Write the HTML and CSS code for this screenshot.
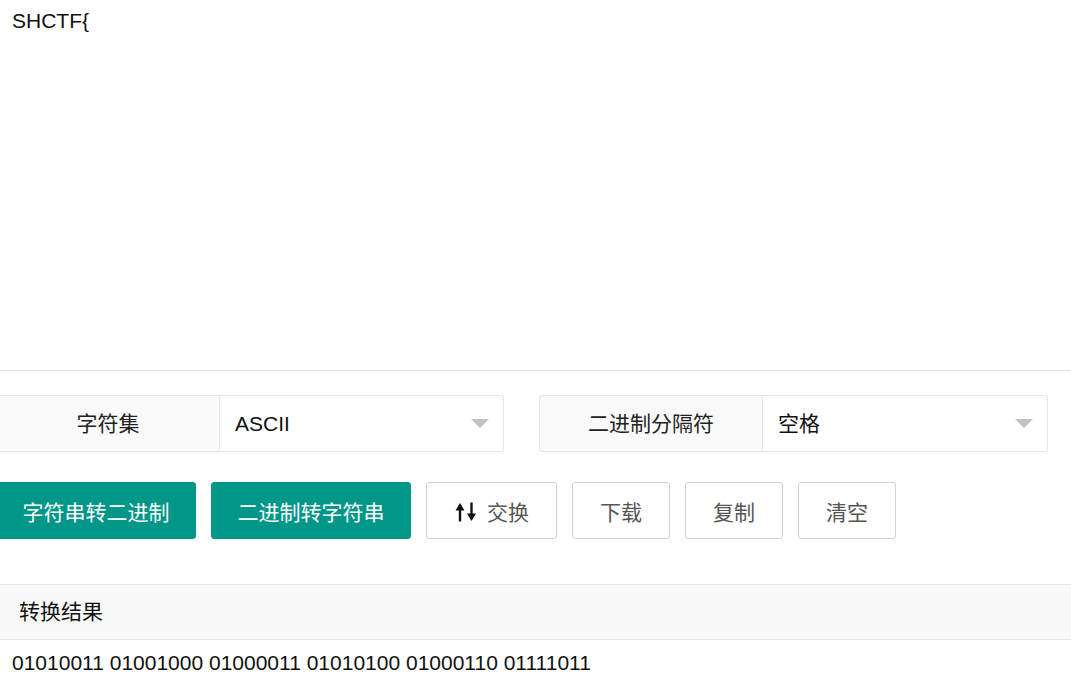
FILE: index.html
```html
<!DOCTYPE html>
<html lang="zh-CN">
<head>
<meta charset="utf-8">
<title>字符串二进制转换</title>
<link rel="stylesheet" href="styles.css">
</head>
<body>
<div class="page">
  <div class="input">SHCTF{</div>

  <div class="options">
    <div class="field">
      <div class="field-label">字符集</div>
      <div class="field-select narrow"><span>ASCII</span><i class="caret"></i></div>
    </div>
    <div class="field">
      <div class="field-label">二进制分隔符</div>
      <div class="field-select"><span>空格</span><i class="caret"></i></div>
    </div>
  </div>

  <div class="actions">
    <button class="btn btn-green">字符串转二进制</button>
    <button class="btn btn-green">二进制转字符串</button>
    <button class="btn btn-plain"><svg class="swap" viewBox="0 0 24 20" width="24" height="20"><path d="M6 19.5V3" stroke="#111" stroke-width="2.4" fill="none"/><path d="M1.5 8.5L6 1 10.5 8.5Z" fill="#111"/><path d="M17.5 0.5v16.5" stroke="#111" stroke-width="2.4" fill="none"/><path d="M13 11.5L17.5 19 22 11.5Z" fill="#111"/></svg>交换</button>
    <button class="btn btn-plain">下载</button>
    <button class="btn btn-plain">复制</button>
    <button class="btn btn-plain">清空</button>
  </div>

  <div class="result-head">转换结果</div>
  <div class="result-body">01010011 01001000 01000011 01010100 01000110 01111011</div>
</div>
</body>
</html>
```

FILE: styles.css
```css
html, body {
  margin: 0;
  padding: 0;
  background: #fff;
  overflow: hidden;
}
body {
  font-family: "Liberation Sans", "Noto Sans CJK SC", sans-serif;
  font-size: 21px;
  color: #111;
}
.page {
  margin-left: -4px;
  width: 1100px;
}
.input {
  box-sizing: border-box;
  height: 372px;
  margin-top: -1px;
  border: 1px solid #e6e6e6;
  padding: 6px 15px;
  line-height: 30px;
}
.options {
  display: flex;
  gap: 35px;
  margin-top: 24px;
}
.field {
  display: flex;
  height: 57px;
}
.field-label {
  box-sizing: border-box;
  width: 224px;
  border: 1px solid #e6e6e6;
  border-radius: 3px 0 0 3px;
  background: #fafafa;
  text-align: center;
  line-height: 55px;
  color: #222;
}
.field-select {
  box-sizing: border-box;
  width: 285px;
  border: 1px solid #e6e6e6;
  border-left: none;
  border-radius: 0 3px 3px 0;
  display: flex;
  align-items: center;
  justify-content: space-between;
  padding: 0 14px 0 15px;
  line-height: 55px;
}
.field-select.narrow {
  width: 284px;
}
.caret {
  width: 0;
  height: 0;
  border-top: 9px solid #c2c2c2;
  border-left: 9px solid transparent;
  border-right: 9px solid transparent;
}
.actions {
  display: flex;
  gap: 15px;
  margin-top: 30px;
}
.btn {
  box-sizing: border-box;
  height: 57px;
  border-radius: 3px;
  font-family: inherit;
  font-size: 21px;
  display: flex;
  align-items: center;
  cursor: pointer;
}
.btn-green {
  background: #009688;
  border: 1px solid #009688;
  color: #fff;
  padding: 0 25.5px;
}
.btn-plain {
  background: #fff;
  border: 1px solid #d2d2d2;
  color: #555;
  padding: 0 27px;
}
.swap {
  margin-right: 9px;
  margin-top: 2px;
}
.result-head {
  box-sizing: border-box;
  margin-top: 45px;
  height: 56px;
  border-top: 1px solid #e6e6e6;
  border-bottom: 1px solid #e6e6e6;
  background: #f9f9f9;
  padding-left: 23px;
  line-height: 54px;
}
.result-body {
  padding: 8px 16px;
  line-height: 30px;
}
```
